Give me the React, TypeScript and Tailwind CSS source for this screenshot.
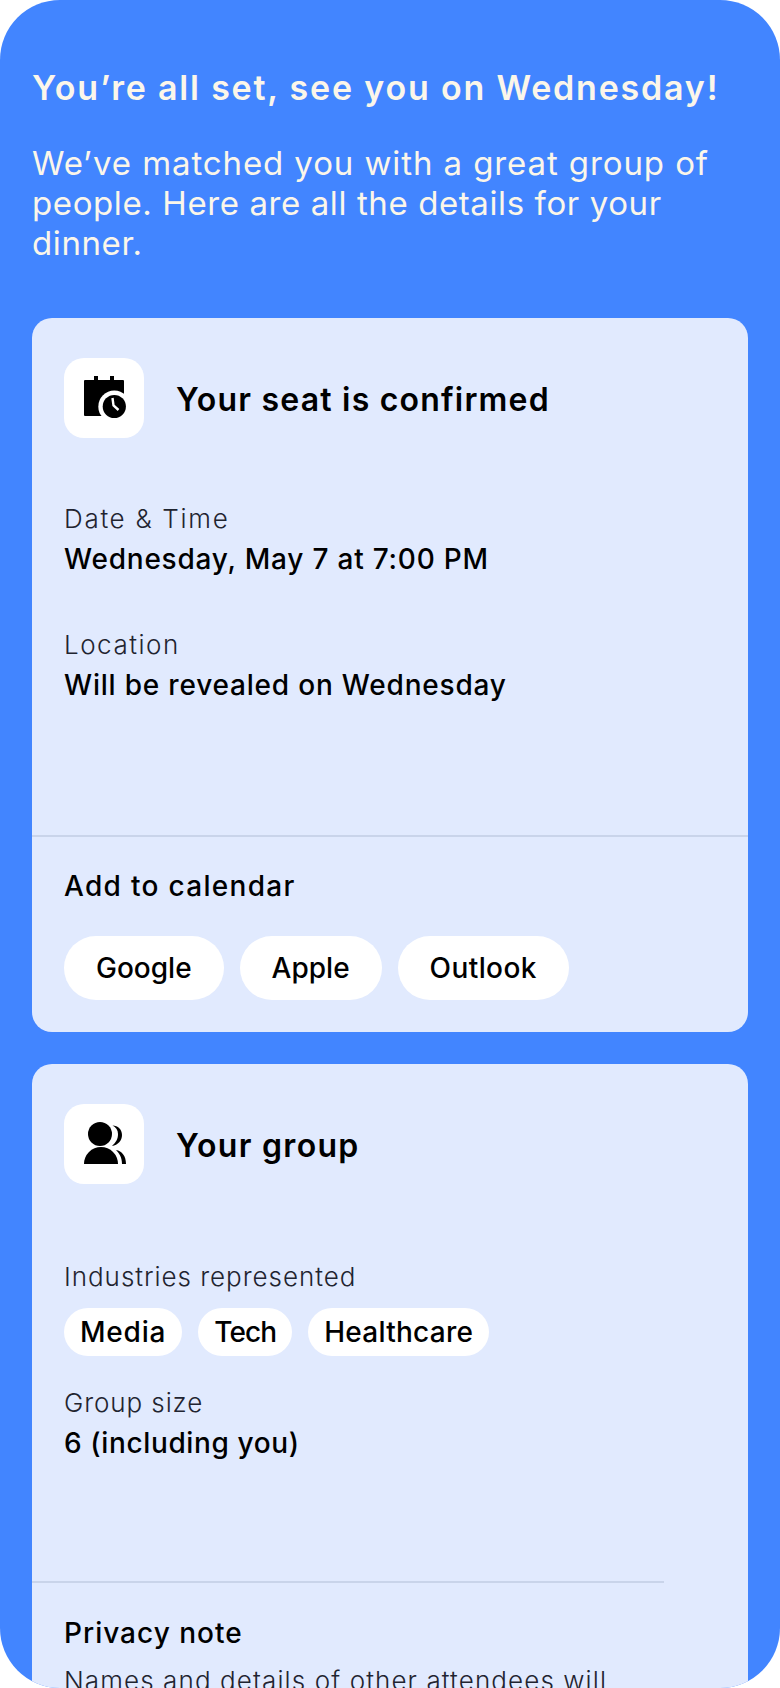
const font = "font-['Inter','Liberation_Sans',sans-serif]";

function CalendarIcon() {
  return (
    <svg viewBox="0 0 80 80" className="w-20 h-20">
      <rect x="20" y="22" width="40" height="36" rx="1" fill="#000" />
      <rect x="30" y="18" width="4" height="5" fill="#000" />
      <rect x="46" y="18" width="4" height="5" fill="#000" />
      <circle cx="50.3" cy="48.5" r="16" fill="#fff" />
      <circle cx="50.3" cy="48.5" r="11.6" fill="#000" />
      <path d="M48.5 40 L49.5 47.5 L54.5 52" fill="none" stroke="#fff" strokeWidth="2.4" />
    </svg>
  );
}

function PeopleIcon() {
  return (
    <svg viewBox="0 0 80 80" className="w-20 h-20">
      <circle cx="36" cy="30" r="12" fill="#000" />
      <path d="M20 60 a17 17 0 0 1 34 0 z" fill="#000" />
      <path d="M48.5 21.5 C54 21.5 58 25.5 58 31 C58 36.5 54 41 48 42 C52 38 54 35 54 30 C54 26 52 23.5 48.5 21.5 Z" fill="#000" />
      <path d="M52 46 C58 47 62 52 62 60 H58 C58 53 55 49 52 46 Z" fill="#000" />
    </svg>
  );
}

function Header({ icon, title, cls }: { icon: React.ReactNode; title: string; cls: string }) {
  return (
    <div className="flex items-center gap-8 pl-8">
      <div className="w-20 h-20 rounded-[20px] bg-white flex items-center justify-center">{icon}</div>
      <h2 className={`text-[32px] leading-[40px] font-semibold text-black ${cls}`}>{title}</h2>
    </div>
  );
}

function Field({ label, value, labelCls, valueCls }: { label: string; value: string; labelCls: string; valueCls: string }) {
  return (
    <div>
      <div className={`text-[26px] leading-[40px] font-light text-[#1f2430] ${labelCls}`}>{label}</div>
      <div className={`text-[28px] leading-[40px] font-medium text-black ${valueCls}`}>{value}</div>
    </div>
  );
}

function Pill({ children, cls }: { children: string; cls: string }) {
  return (
    <div className={`rounded-full bg-white flex items-center text-[28px] font-medium text-black ${cls}`}>{children}</div>
  );
}

export default function App() {
  return (
    <div className={`w-[780px] h-[1688px] bg-white overflow-hidden ${font}`}>
      <div className="h-full rounded-[60px] bg-[#4285ff] overflow-hidden px-8 pt-[68px]">
        <h1 className="text-[34px] leading-[40px] font-semibold text-[#fbf6ea] whitespace-nowrap tracking-[1.8px]">
          You’re all set, see you on Wednesday!
        </h1>
        <p className="mt-[35px] text-[33px] leading-[40px] font-normal text-[#fbf6ea] whitespace-nowrap">
          <span className="block tracking-[0.9px]">We’ve matched you with a great group of</span>
          <span className="block tracking-[0.6px]">people. Here are all the details for your</span>
          <span className="block tracking-[0.6px]">dinner.</span>
        </p>

        <section className="mt-[55px] rounded-[20px] bg-[#e1eafe] pt-10 pb-8">
          <Header icon={<CalendarIcon />} title="Your seat is confirmed" cls="tracking-[1.2px] pt-[4px]" />
          <div className="pl-8 mt-[61px] flex flex-col gap-[46px]">
            <Field label="Date & Time" value="Wednesday, May 7 at 7:00 PM" labelCls="tracking-[1.7px]" valueCls="tracking-[0.78px]" />
            <Field label="Location" value="Will be revealed on Wednesday" labelCls="tracking-[1.5px]" valueCls="tracking-[0.8px]" />
          </div>
          <div className="mt-[130px] h-0.5 bg-[#c9d4ea]" />
          <div className="pl-8 pt-[29px]">
            <div className="text-[28px] leading-[40px] font-medium text-black tracking-[1.3px]">Add to calendar</div>
            <div className="mt-[30px] flex gap-4">
              <Pill cls="h-16 px-8">Google</Pill>
              <Pill cls="h-16 px-8">Apple</Pill>
              <Pill cls="h-16 px-8 tracking-[0.4px]">Outlook</Pill>
            </div>
          </div>
        </section>

        <section className="mt-8 rounded-[20px] bg-[#e1eafe] pt-10">
          <Header icon={<PeopleIcon />} title="Your group" cls="tracking-[1.3px] pt-[4px]" />
          <div className="pl-8 mt-[73px]">
            <div className="text-[26px] leading-[40px] font-light text-[#1f2430] tracking-[0.95px]">Industries represented</div>
            <div className="mt-[11px] flex gap-4">
              <Pill cls="h-12 px-4 tracking-[0.8px]">Media</Pill>
              <Pill cls="h-12 px-4 tracking-[-0.9px]">Tech</Pill>
              <Pill cls="h-12 px-4 tracking-[0.25px]">Healthcare</Pill>
            </div>
            <div className="mt-[27px]">
              <Field label="Group size" value="6 (including you)" labelCls="tracking-[0.9px]" valueCls="tracking-[0.63px]" />
            </div>
          </div>
          <div className="mt-[118px] h-0.5 w-[632px] bg-[#c9d4ea]" />
          <div className="pl-8 pt-[30px]">
            <div className="text-[28px] leading-[40px] font-medium text-black tracking-[1px]">Privacy note</div>
            <div className="mt-[8px] text-[26px] leading-[40px] font-light text-[#1f2430] tracking-[1.1px] whitespace-nowrap">
              Names and details of other attendees will
            </div>
          </div>
        </section>
      </div>
    </div>
  );
}
